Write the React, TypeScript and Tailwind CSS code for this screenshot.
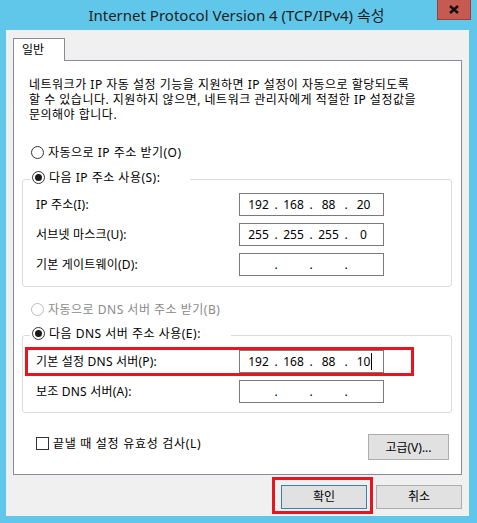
// @ts-nocheck
import * as React from 'react';

const font = "font-['Noto_Sans','Noto_Sans_CJK_KR',sans-serif]";

function Radio({ checked = false, disabled = false }) {
  return (
    <span
      className={`flex h-[13px] w-[13px] shrink-0 items-center justify-center rounded-full border bg-white ${
        disabled ? 'border-[#bcbcbc]' : 'border-[#333333]'
      }`}
    >
      {checked && <span className="h-[7px] w-[7px] rounded-full bg-[#1a1a1a]" />}
    </span>
  );
}

function IpBox({ parts = ['', '', '', ''], caret = false }) {
  return (
    <div className="flex h-[23px] w-[145px] shrink-0 items-center border border-[#7a7a7a] bg-white pl-[4px] text-[12px] leading-none text-black">
      {parts.map((p, i) => (
        <React.Fragment key={i}>
          <span className="flex w-[29px] justify-center">
            <span className="relative">
              {p}
              {caret && i === 3 && <span className="absolute -right-[2px] -top-[3px] h-[17px] w-px bg-black" />}
            </span>
          </span>
          {i < 3 && <span className="w-[6px] text-center">.</span>}
        </React.Fragment>
      ))}
    </div>
  );
}

function Row({ label, parts, caret }) {
  return (
    <div className="flex h-[23px] items-center pl-[13px]">
      <span className="w-[203px] tracking-[0.2px]">{label}</span>
      <IpBox parts={parts} caret={caret} />
    </div>
  );
}

function Button({ children, primary = false, width = 'w-[86px]' }) {
  return (
    <button
      className={`flex h-[24px] ${width} items-center justify-center border bg-[#e1e1e1] text-[12px] text-black ${
        primary ? 'border-[#3c7fb1]' : 'border-[#adadad]'
      }`}
    >
      {children}
    </button>
  );
}

export default function App() {
  return (
    <div className={`h-[523px] w-[477px] overflow-hidden bg-[#61c7ea] ${font} text-[12px] text-black`}>
      {/* title bar */}
      <div className="relative flex h-[30px] items-center justify-center pr-[4px]">
        <span className="text-[15px] leading-none text-[#1e1e1e]">Internet Protocol Version 4 (TCP/IPv4) 속성</span>
        <div className="absolute right-[6px] top-0 flex h-[20px] w-[34px] items-center justify-center border border-t-0 border-[#9b3f36] bg-[#c75a50]">
          <svg width="10" height="9" viewBox="0 0 10 9">
            <path d="M1 1 L9 8 M9 1 L1 8" stroke="#111" strokeWidth="2.4" />
          </svg>
        </div>
      </div>

      {/* client area */}
      <div className="ml-[6px] mr-[8px] flex h-[486px] flex-col bg-[#f0f0f0] px-[7px] pt-[8px]">
        <div className="relative z-10 -mb-px flex h-[23px] w-[52px] items-center border border-b-0 border-[#898c95] bg-white pl-[8px]">
          일반
        </div>

        <div className="flex h-[415px] flex-col border border-[#898c95] bg-white leading-[15px]">
          <p className="ml-[15px] mt-[16px] tracking-[0.5px]">
            네트워크가 IP 자동 설정 기능을 지원하면 IP 설정이 자동으로 할당되도록
            <br />
            할 수 있습니다. 지원하지 않으면, 네트워크 관리자에게 적절한 IP 설정값을
            <br />
            문의해야 합니다.
          </p>

          <label className="ml-[17px] mt-[22px] flex h-[16px] items-center gap-[4px] tracking-[0.5px]">
            <Radio />
            자동으로 IP 주소 받기(O)
          </label>

          <fieldset className="ml-[8px] mt-[9px] w-[430px] rounded-[3px] border border-[#dcdcdc] pb-[10px]">
            <legend className="ml-[7px] flex h-[20px] items-start pr-[30px]">
              <span className="flex h-[16px] items-center gap-[4px] pl-[2px] tracking-[0.5px]">
                <Radio checked />
                다음 IP 주소 사용(S):
              </span>
            </legend>
            <div className="mt-[4px] flex flex-col gap-[7px]">
              <Row label="IP 주소(I):" parts={['192', '168', '88', '20']} />
              <Row label="서브넷 마스크(U):" parts={['255', '255', '255', '0']} />
              <Row label="기본 게이트웨이(D):" />
            </div>
          </fieldset>

          <label className="ml-[17px] mt-[14px] flex h-[16px] items-center gap-[4px] tracking-[0.5px] text-[#8a8a8a]">
            <Radio disabled />
            자동으로 DNS 서버 주소 받기(B)
          </label>

          <fieldset className="ml-[8px] mt-[8px] w-[430px] rounded-[3px] border border-[#dcdcdc] pb-[9px]">
            <legend className="ml-[7px] flex h-[20px] items-start pr-[30px]">
              <span className="flex h-[16px] items-center gap-[4px] pl-[2px] tracking-[0.5px]">
                <Radio checked />
                다음 DNS 서버 주소 사용(E):
              </span>
            </legend>
            <div className="mt-[5px] flex flex-col gap-[7px]">
              <div className="relative">
                <Row label="기본 설정 DNS 서버(P):" parts={['192', '168', '88', '10']} caret />
                <div className="pointer-events-none absolute -bottom-[3px] -top-[3px] left-[2px] right-[37px] border-[3px] border-[#e5161f]" />
              </div>
              <Row label="보조 DNS 서버(A):" />
            </div>
          </fieldset>

          <div className="ml-[22px] mt-[21px] flex w-[413px] items-start justify-between">
            <label className="mt-[2px] flex items-center gap-[4px] tracking-[0.7px]">
              <span className="h-[13px] w-[13px] border border-[#333333] bg-white" />
              끝낼 때 설정 유효성 검사(L)
            </label>
            <Button width="w-[81px] h-[26px]">고급(V)...</Button>
          </div>
        </div>

        <div className="mt-[10px] flex justify-end gap-[9px]">
          <div className="relative">
            <Button primary>확인</Button>
            <div className="pointer-events-none absolute -bottom-[5px] -left-[9px] -right-[6px] -top-[8px] border-[3px] border-[#e5161f]" />
          </div>
          <Button>취소</Button>
        </div>
      </div>
    </div>
  );
}
